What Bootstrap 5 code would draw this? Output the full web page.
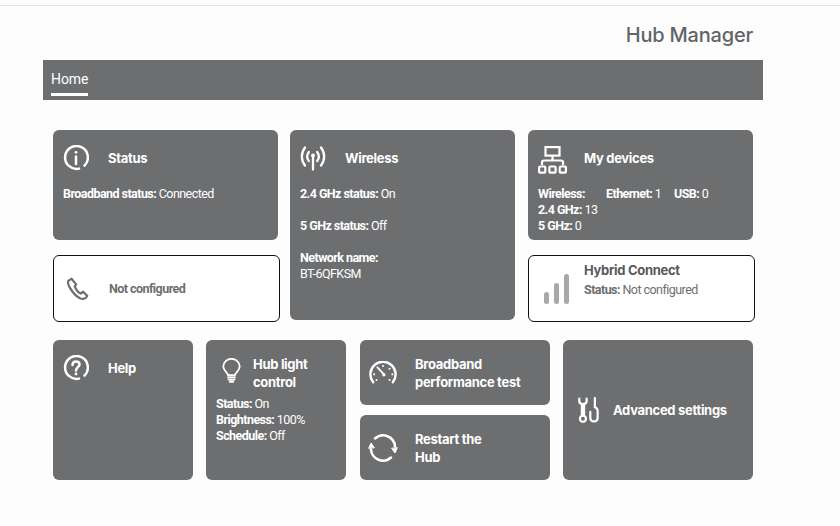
<!DOCTYPE html>
<html lang="en">
<head>
<meta charset="utf-8">
<title>Hub Manager</title>
<link href="https://cdn.jsdelivr.net/npm/bootstrap@5.3.0/dist/css/bootstrap.min.css" rel="stylesheet">
<style>
html,body{height:526px;overflow:hidden}
body{background:#fdfdfd;font-family:"Roboto","Liberation Sans",sans-serif;color:#fff}
.top-rule{height:1px;background:#e2e2e2;margin-top:5px}
.shell{width:720px;margin-left:43px}
.hub-title{font-family:"Inter",sans-serif;font-weight:500;font-size:20px;line-height:24px;color:#636466;text-align:right;padding:17px 10px 13px 0;letter-spacing:-.2px}
.menu-bar{height:40px;background:#6d6e70;padding-left:8px}
.menu-item{display:inline-block;color:#fff;font-size:14px;line-height:19px;padding-top:10px;height:36px;border-bottom:3px solid #fff;text-decoration:none;letter-spacing:-.1px}
.board{padding:30px 0 0 10px;width:715px}
.tile{background:#6d6e70;border-radius:6px;color:#fff;padding:10px}
.tile-out{background:#fff;border:1px solid #111;border-radius:6px;color:#6d6e70;width:227px;height:67px}
.tile-h{height:36px}
.ico{width:45px;flex:none}
.ico svg{display:block}
.tile-t{font-family:"Inter",sans-serif;font-weight:700;font-size:13px;line-height:18px;letter-spacing:-.3px}
.tile-out .tile-t{color:#58595b}
.tile-b{font-size:12.5px;line-height:16px;letter-spacing:-.55px}
.tile-b b{font-weight:700;letter-spacing:-.55px}
.body-gap{margin-top:10px}
.col-a{width:225px}
.col-n{width:140px}
.col-w{width:190px}
.g1{gap:15px}
.row1{height:192px}
.step-l{margin-left:12px}
.step-m{margin-left:13px}
.step-x{margin-left:14px}
.row2{margin-top:18px;height:140px}
.h110{height:110px}
.h190{height:190px}
.h65{height:65px}
.h140{height:140px}
.phone-cell{width:47px;padding-left:12px}
.dev-i{width:46px;padding-top:3px}
.dev-a{width:68px}
.dev-b{width:68px}
.hyb-i{width:55px;padding:18px 0 0 15px}
.hyb-t{padding-top:5px}
.hyb-l{margin-top:3px}
.bulb{width:37px;padding:8px 0 0 6px}
.bulb-t{width:75px;padding-top:5px}
.bulb-b{margin-top:5px}
.adv-i{width:40px;padding-left:4px;flex:none}
.adv-t{padding-bottom:1px}
.nudge svg{margin-left:-1px}
.nudge-r svg{margin-left:-2px}
</style>
</head>
<body>
<div class="top-rule"></div>
<div class="shell">
  <div class="hub-title">Hub Manager</div>
  <div class="menu-bar"><a class="menu-item" href="#">Home</a></div>
  <div class="board">
    <div class="d-flex row1">
      <div class="col-a d-flex flex-column g1">
        <div class="tile h110">
          <div class="d-flex align-items-center tile-h">
            <div class="ico"><svg width="26" height="26" viewBox="0 0 26 26" fill="none" stroke="#fff" stroke-width="2.500" stroke-linecap="round"><path d="M16 23.600A11.400 11.400 0 1 1 21.500 20.600"/><path d="M13 11.500V19"/><circle cx="13" cy="7.300" r="1.400" fill="#fff" stroke="none"/></svg></div>
            <div class="tile-t">Status</div>
          </div>
          <div class="tile-b body-gap"><b>Broadband status:</b> Connected</div>
        </div>
        <div class="tile-out d-flex align-items-center">
          <div class="ico phone-cell"><svg width="24" height="25" viewBox="0 0 26 26" fill="none" stroke="#6d6e70" stroke-width="2.400" stroke-linecap="round" stroke-linejoin="round"><path d="M6 2.500 2.800 4.500C1.800 5.500 2 8 3.800 11.500 6 15.500 10.500 21 15 23.500 17.500 24.500 20 24.500 21.500 23L23 21 18.500 16.500 16 18.500C13.500 17.500 10.500 13.500 9.500 10.500L11 8.500Z"/></svg></div>
          <div class="tile-b ms-2"><b>Not configured</b></div>
        </div>
      </div>
      <div class="col-a step-l">
        <div class="tile h190">
          <div class="d-flex align-items-center tile-h">
            <div class="ico"><svg width="26" height="26" viewBox="0 0 26 26" fill="none" stroke="#fff" stroke-width="2.300" stroke-linecap="round"><path d="M5 2.500C.8 8 .8 15 5 20.500"/><path d="M21 2.500C25.200 8 25.200 15 21 20.500"/><path d="M8.800 7C6.800 10 6.800 13.500 8.800 16"/><path d="M17.200 7C19.200 10 19.200 13.500 17.200 16"/><path d="M13 12.500V24.500"/><circle cx="13" cy="10.500" r="2" fill="#fff" stroke="none"/></svg></div>
            <div class="tile-t">Wireless</div>
          </div>
          <div class="tile-b body-gap"><b>2.4 GHz status:</b> On</div>
          <div class="tile-b mt-3"><b>5 GHz status:</b> Off</div>
          <div class="tile-b mt-3"><b>Network name:</b><br>BT-6QFKSM</div>
        </div>
      </div>
      <div class="col-a d-flex flex-column g1 step-m">
        <div class="tile h110">
          <div class="d-flex align-items-center tile-h">
            <div class="ico dev-i"><svg width="29" height="28" viewBox="0 0 29 28" fill="none" stroke="#fff" stroke-width="2.200"><rect x="7.500" y="1.100" width="14" height="8.500"/><path d="M14.500 9.500V14M4 19V16C4 15 5 14.500 6 14.500H23C24 14.500 25 15 25 16V19"/><rect x="1.100" y="20.500" width="6.200" height="6.200" rx="1"/><rect x="11.400" y="20.500" width="6.200" height="6.200" rx="1"/><rect x="21.700" y="20.500" width="6.200" height="6.200" rx="1"/></svg></div>
            <div class="tile-t">My devices</div>
          </div>
          <div class="tile-b body-gap"><div class="d-flex"><span class="dev-a"><b>Wireless:</b></span><span class="dev-b"><b>Ethernet:</b> 1</span><span><b>USB:</b> 0</span></div><b>2.4 GHz:</b> 13<br><b>5 GHz:</b> 0</div>
        </div>
        <div class="tile-out d-flex">
          <div class="ico hyb-i"><svg width="26" height="32" viewBox="0 0 26 32" fill="#a7a8a9"><rect x="0" y="18" width="5" height="12" rx="2.500"/><rect x="10" y="9" width="5" height="21" rx="2.500"/><rect x="20" y="0" width="5" height="30" rx="2.500"/></svg></div>
          <div class="hyb-t"><div class="tile-t">Hybrid Connect</div><div class="tile-b hyb-l"><b>Status:</b> Not configured</div></div>
        </div>
      </div>
    </div>
    <div class="d-flex row2">
      <div class="tile col-n h140">
        <div class="d-flex align-items-center tile-h">
          <div class="ico"><svg width="26" height="26" viewBox="0 0 26 26" fill="none" stroke="#fff" stroke-width="2.500" stroke-linecap="round"><path d="M16 23.600A11.400 11.400 0 1 1 21.500 20.600"/><path d="M9.500 10C9.500 7.800 11 6.500 13 6.500 15 6.500 16.500 7.800 16.500 9.600 16.500 12 13 12 13 15.500"/><circle cx="13" cy="19" r="1.400" fill="#fff" stroke="none"/></svg></div>
          <div class="tile-t">Help</div>
        </div>
      </div>
      <div class="tile col-n h140 step-m">
        <div class="d-flex">
          <div class="ico bulb"><svg width="19" height="25" viewBox="0 0 22 28" fill="none" stroke="#fff" stroke-width="2.100" stroke-linecap="round"><path d="M7 19.500C7 16.500 1.500 14.500 1.500 9.500A9.500 9 0 0 1 20.500 9.500C20.500 14.500 15 16.500 15 19.500Z"/><path d="M7 22H15M7.500 24.500H14.500M9 27H13"/></svg></div>
          <div class="tile-t bulb-t">Hub light control</div>
        </div>
        <div class="tile-b bulb-b"><b>Status:</b> On<br><b>Brightness:</b> 100%<br><b>Schedule:</b> Off</div>
      </div>
      <div class="col-w d-flex flex-column justify-content-between step-x">
        <div class="tile h65 d-flex align-items-center">
          <div class="ico nudge"><svg width="28" height="23" viewBox="0 0 30 24" fill="none" stroke="#fff" stroke-width="2" stroke-linecap="round"><path d="M4.500 22.500A13.500 13.500 0 1 1 25.500 22.500" stroke-width="2.600"/><path d="M9 6.500 16 14"/><circle cx="16" cy="14.500" r="1.800" fill="#fff" stroke="none"/><circle cx="5.500" cy="14" r="1.100" fill="#fff" stroke="none"/><circle cx="15" cy="5" r="1.100" fill="#fff" stroke="none"/><circle cx="22" cy="8" r="1.100" fill="#fff" stroke="none"/><circle cx="25" cy="14" r="1.100" fill="#fff" stroke="none"/><circle cx="8" cy="20" r="1.100" fill="#fff" stroke="none"/><circle cx="22" cy="20" r="1.100" fill="#fff" stroke="none"/></svg></div>
          <div class="tile-t">Broadband performance test</div>
        </div>
        <div class="tile h65 d-flex align-items-center">
          <div class="ico nudge-r"><svg width="30" height="28" viewBox="0 0 30 28" fill="none" stroke="#fff" stroke-width="2.500" stroke-linecap="round"><path d="M7 4.500A12 12 0 0 1 27 12.500"/><path d="M23 23.500A12 12 0 0 1 3 15.500"/><path d="M.8 14 3 9 6.200 13.500Z" fill="#fff" stroke-width="1"/><path d="M29.200 14 27 19 23.800 14.500Z" fill="#fff" stroke-width="1"/></svg></div>
          <div class="tile-t">Restart the<br>Hub</div>
        </div>
      </div>
      <div class="tile col-w h140 d-flex align-items-center step-m">
        <div class="adv-i"><svg width="22" height="26" viewBox="0 0 24 28" fill="none" stroke="#fff" stroke-width="2.400" stroke-linecap="round"><path d="M2.500 1.500V4.500C2.500 6.500 4 7.500 6.500 7.500 9 7.500 10.500 6.500 10.500 4.500V1.500"/><path d="M5.300 8V20M7.700 8V20"/><circle cx="6.500" cy="23.500" r="3.300"/><path d="M19.500 1V11C21 11.500 22.500 12.500 22.500 15V22.500C22.500 25 21 26.500 18.500 26.500 16 26.500 14.500 25 14.500 22.500V16"/></svg></div>
        <div class="tile-t adv-t">Advanced settings</div>
      </div>
    </div>
  </div>
</div>
<script src="https://cdn.jsdelivr.net/npm/bootstrap@5.3.0/dist/js/bootstrap.bundle.min.js"></script>
</body>
</html>
